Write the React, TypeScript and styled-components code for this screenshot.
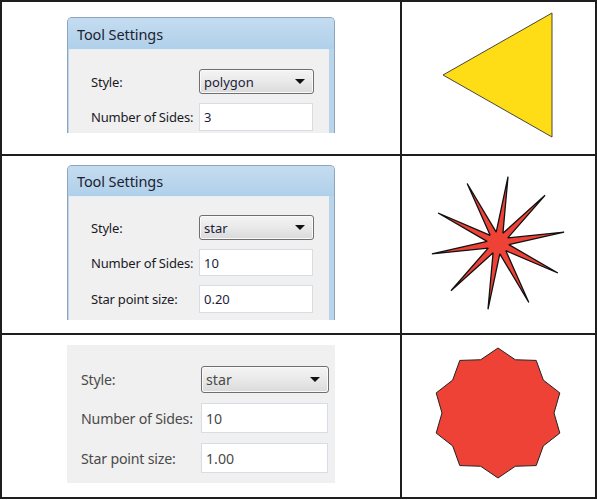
import React from "react";
import styled, { createGlobalStyle } from "styled-components";

const Global = createGlobalStyle`
  html, body { margin: 0; padding: 0; background: #ffffff; }
  body { font-family: "Noto Sans", "Liberation Sans", Arial, sans-serif; }
`;

const Table = styled.div`
  width: 597px;
  height: 499px;
  box-sizing: border-box;
  padding: 2px;
  background: #1e1e1e;
  display: grid;
  grid-template-columns: 398px 1fr;
  grid-template-rows: 152px 177px 162px;
  gap: 2px;
`;

const LeftCell = styled.div<{ $top: number }>`
  background: #ffffff;
  padding: ${(p) => p.$top}px 0 0 65px;
  overflow: hidden;
`;

const RightCell = styled.div`
  background: #ffffff;
  overflow: hidden;
`;

const Window = styled.div<{ $h: number }>`
  width: 268px;
  height: ${(p) => p.$h}px;
  box-sizing: border-box;
  display: flex;
  flex-direction: column;
  border: 1px solid #8ea6bd;
  border-bottom: none;
  border-radius: 5px 5px 0 0;
  background: #b9d5ec;
  overflow: hidden;
`;

const TitleBar = styled.div<{ $h: number }>`
  height: ${(p) => p.$h}px;
  flex: none;
  display: flex;
  align-items: center;
  padding-left: 9px;
  background: linear-gradient(#c4dcf0, #b0d0ea);
  font-size: 14.5px;
  color: #1c2230;
  letter-spacing: -0.1px;
`;

const Body = styled.div<{ $pt: number }>`
  flex: 1;
  margin: 0 5px 0 1px;
  border-top: 1px solid #e6eef6;
  background: #f0f0f0;
  padding: ${(p) => p.$pt}px 0 0 22px;
  display: flex;
  flex-direction: column;
  gap: 9px;
`;

const Plain = styled.div`
  width: 268px;
  height: 138px;
  box-sizing: border-box;
  background: #f0f0f0;
  padding: 21px 0 0 14px;
  display: flex;
  flex-direction: column;
  gap: 10px;
`;

const Row = styled.div<{ $labelW: number }>`
  display: grid;
  grid-template-columns: ${(p) => p.$labelW}px auto;
  align-items: center;
`;

const Label = styled.span<{ $big?: boolean }>`
  font-size: ${(p) => (p.$big ? 14.2 : 13)}px;
  color: ${(p) => (p.$big ? "#4a4a4a" : "#1a1a26")};
  letter-spacing: -0.2px;
  white-space: nowrap;
`;

const Select = styled.div<{ $w: number; $h: number; $big?: boolean }>`
  width: ${(p) => p.$w}px;
  height: ${(p) => p.$h}px;
  box-sizing: border-box;
  border: 1px solid #6f6f6f;
  border-radius: 3px;
  background: linear-gradient(#f4f4f4 0%, #e9e9e9 50%, #dadada 100%);
  box-shadow: inset 0 0 0 1px #fafafa;
  display: flex;
  align-items: center;
  justify-content: space-between;
  padding: 0 8px 0 4px;
  font-size: ${(p) => (p.$big ? 14.2 : 13)}px;
  color: ${(p) => (p.$big ? "#4a4a4a" : "#1c1c3a")};
`;

const Arrow = styled.span`
  width: 0;
  height: 0;
  border-left: 5px solid transparent;
  border-right: 5px solid transparent;
  border-top: 5px solid #111;
`;

const Input = styled.div<{ $w: number; $h: number; $big?: boolean }>`
  width: ${(p) => p.$w}px;
  height: ${(p) => p.$h}px;
  box-sizing: border-box;
  background: #ffffff;
  border: 1px solid #d7dde4;
  display: flex;
  align-items: center;
  padding-left: 4px;
  font-size: ${(p) => (p.$big ? 14.2 : 13)}px;
  color: ${(p) => (p.$big ? "#4a4a4a" : "#1c1c3a")};
`;

const Svg = styled.svg`
  display: block;
`;

function starPoints(cx: number, cy: number, ro: number, ri: number, n: number, rotDeg: number) {
  const pts: string[] = [];
  for (let i = 0; i < n * 2; i++) {
    const r = i % 2 === 0 ? ro : ri;
    const a = ((rotDeg + (i * 180) / n) * Math.PI) / 180;
    pts.push(`${(cx + r * Math.sin(a)).toFixed(2)},${(cy - r * Math.cos(a)).toFixed(2)}`);
  }
  return pts.join(" ");
}

export default function App() {
  return (
    <>
      <Global />
      <Table>
        <LeftCell $top={15}>
          <Window $h={116}>
            <TitleBar $h={31}>Tool Settings</TitleBar>
            <Body $pt={19}>
              <Row $labelW={108}>
                <Label>Style:</Label>
                <Select $w={115} $h={25}>
                  polygon
                  <Arrow />
                </Select>
              </Row>
              <Row $labelW={108}>
                <Label>Number of Sides:</Label>
                <Input $w={114} $h={28}>3</Input>
              </Row>
            </Body>
          </Window>
        </LeftCell>
        <RightCell>
          <Svg width="193" height="152" viewBox="0 0 193 152">
            <polygon points="41,73 150,11 150,135" fill="#fedc16" stroke="#333" strokeWidth="0.9" />
          </Svg>
        </RightCell>

        <LeftCell $top={9}>
          <Window $h={155}>
            <TitleBar $h={30}>Tool Settings</TitleBar>
            <Body $pt={18}>
              <Row $labelW={108}>
                <Label>Style:</Label>
                <Select $w={115} $h={25}>
                  star
                  <Arrow />
                </Select>
              </Row>
              <Row $labelW={108}>
                <Label>Number of Sides:</Label>
                <Input $w={114} $h={27}>10</Input>
              </Row>
              <Row $labelW={108}>
                <Label>Star point size:</Label>
                <Input $w={114} $h={28}>0.20</Input>
              </Row>
            </Body>
          </Window>
        </LeftCell>
        <RightCell>
          <Svg width="193" height="177" viewBox="0 0 193 177">
            <polygon
              points={starPoints(96, 87, 67, 11, 10, 8.6)}
              fill="#ee4236"
              stroke="#111"
              strokeWidth="1.3"
              strokeLinejoin="miter"
              strokeMiterlimit={2}
            />
          </Svg>
        </RightCell>

        <LeftCell $top={10}>
          <Plain>
            <Row $labelW={120}>
              <Label $big>Style:</Label>
              <Select $w={128} $h={27} $big>
                star
                <Arrow />
              </Select>
            </Row>
            <Row $labelW={120}>
              <Label $big>Number of Sides:</Label>
              <Input $w={127} $h={30} $big>10</Input>
            </Row>
            <Row $labelW={120}>
              <Label $big>Star point size:</Label>
              <Input $w={127} $h={30} $big>1.00</Input>
            </Row>
          </Plain>
        </LeftCell>
        <RightCell>
          <Svg width="193" height="162" viewBox="0 0 193 162">
            <polygon points={starPoints(96, 78, 65, 56, 10, 0)} fill="#ee4236" stroke="#222" strokeWidth="1" />
          </Svg>
        </RightCell>
      </Table>
    </>
  );
}
